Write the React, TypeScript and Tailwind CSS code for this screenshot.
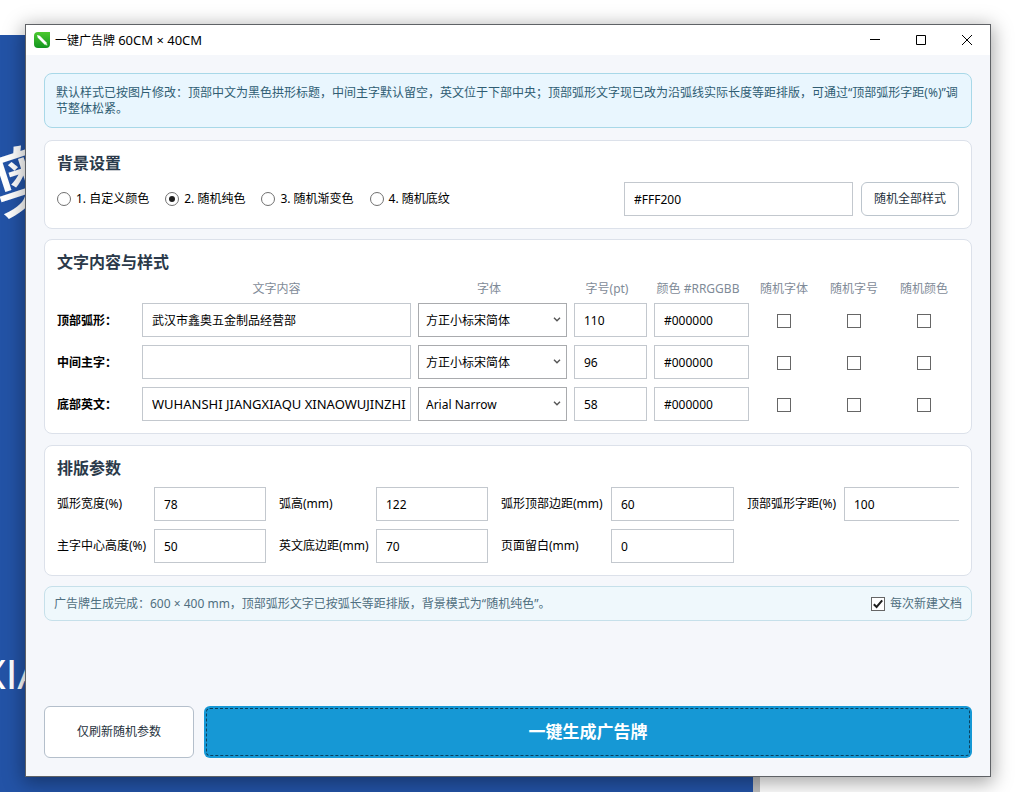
import { useState } from 'react';
import type { InputHTMLAttributes } from 'react';

interface TextRow {
  id: string;
  label: string;
  content: string;
  font: string;
  size: string;
  color: string;
}

interface Param {
  id: string;
  label: string;
  value: string;
}

const MODES = ['1. 自定义颜色', '2. 随机纯色', '3. 随机渐变色', '4. 随机底纹'];

const FONTS = ['方正小标宋简体', 'Arial Narrow'];

const ROWS: TextRow[] = [
  { id: 'top', label: '顶部弧形：', content: '武汉市鑫奥五金制品经营部', font: '方正小标宋简体', size: '110', color: '#000000' },
  { id: 'middle', label: '中间主字：', content: '', font: '方正小标宋简体', size: '96', color: '#000000' },
  {
    id: 'bottom',
    label: '底部英文：',
    content: 'WUHANSHI JIANGXIAQU XINAOWUJINZHIPINJINGYINGBU',
    font: 'Arial Narrow',
    size: '58',
    color: '#000000',
  },
];

const PARAMS: Param[] = [
  { id: 'arc-width', label: '弧形宽度(%)', value: '78' },
  { id: 'arc-height', label: '弧高(mm)', value: '122' },
  { id: 'arc-top', label: '弧形顶部边距(mm)', value: '60' },
  { id: 'arc-spacing', label: '顶部弧形字距(%)', value: '100' },
  { id: 'main-center', label: '主字中心高度(%)', value: '50' },
  { id: 'en-bottom', label: '英文底边距(mm)', value: '70' },
  { id: 'page-margin', label: '页面留白(mm)', value: '0' },
];

const RANDOM_COLUMNS = ['随机字体', '随机字号', '随机颜色'];

const card = 'rounded-lg border border-[#dce1ea] bg-white p-3';
const heading = 'mb-2 text-[16px] leading-[21px] font-bold text-[#2b3a4a]';

function TextBox({ className = '', ...props }: InputHTMLAttributes<HTMLInputElement>) {
  return (
    <input
      type="text"
      className={'block h-[34px] border border-[#c3c8ce] bg-white pr-1 pl-[9px] text-black outline-none ' + className}
      {...props}
    />
  );
}

function CheckBox({ className = '', ...props }: InputHTMLAttributes<HTMLInputElement>) {
  return (
    <span className={'relative inline-block size-[14px] ' + className}>
      <input
        type="checkbox"
        className="peer block size-[14px] appearance-none border border-[#666] bg-white"
        {...props}
      />
      <svg
        viewBox="0 0 14 14"
        className="pointer-events-none absolute inset-0 hidden size-[14px] peer-checked:block"
        fill="none"
        stroke="#1f1f1f"
        strokeWidth="2"
      >
        <path d="M2.8 7.2 5.6 10 11.2 3.4" />
      </svg>
    </span>
  );
}

function AppIcon() {
  return (
    <svg viewBox="0 0 16 16" className="size-4">
      <defs>
        <linearGradient id="logo" x1="0" y1="0" x2="0" y2="1">
          <stop offset="0" stopColor="#4cc92f" />
          <stop offset="1" stopColor="#12951f" />
        </linearGradient>
      </defs>
      <path d="M4 0H16V12a4 4 0 0 1-4 4H4a4 4 0 0 1-4-4V4a4 4 0 0 1 4-4Z" fill="url(#logo)" />
      <path d="M3 3 5.8 3.8 13 11 11 13 3.8 5.8Z" fill="#fff" />
      <path d="M11 13 13 11 13.4 13.4Z" fill="#c9efc4" />
    </svg>
  );
}

function TitleBar() {
  return (
    <header className="flex h-[30px] items-center bg-white pl-2">
      <AppIcon />
      <h1 className="ml-[5px] flex-1 text-black">
        一键广告牌 <span className="text-[13px]">60CM × 40CM</span>
      </h1>
      <button type="button" aria-label="最小化" className="flex h-full w-[46px] items-center justify-center">
        <svg viewBox="0 0 10 10" className="size-[10px]" stroke="#000">
          <path d="M0 4.5H10" />
        </svg>
      </button>
      <button type="button" aria-label="最大化" className="flex h-full w-[46px] items-center justify-center">
        <svg viewBox="0 0 10 10" className="size-[10px]" stroke="#000" fill="none">
          <path d="M.5 .5H9.5V9.5H.5Z" />
        </svg>
      </button>
      <button type="button" aria-label="关闭" className="flex h-full w-[46px] items-center justify-center">
        <svg viewBox="0 0 10 10" className="size-[10px]" stroke="#000">
          <path d="M0 0 10 10M10 0 0 10" />
        </svg>
      </button>
    </header>
  );
}

/** The drawing page that lies behind the dialog. */
function Canvas() {
  return (
    <div
      aria-hidden="true"
      className="absolute top-[35px] bottom-0 left-0 w-[760px] border-r-[7px] border-[#c0c0c0] bg-[#2353a6] text-white"
    >
      <div className="relative h-full w-[26px] overflow-hidden">
        <span className="absolute top-[92px] -left-[9px] -rotate-18 text-[72px] leading-[100px] font-medium">奥</span>
        <span className="absolute top-[614px] -left-[20px] font-[Lato] text-[40px] leading-[50px]">XIA</span>
      </div>
    </div>
  );
}

function BackgroundCard() {
  const [mode, setMode] = useState(1);

  return (
    <section className={card}>
      <h2 className={heading}>背景设置</h2>
      <div className="flex items-center gap-2">
        <div className="flex flex-1 gap-4">
          {MODES.map((label, i) => (
            <label key={label} className="flex items-center gap-[5px] whitespace-nowrap">
              <input
                type="radio"
                name="mode"
                checked={mode === i}
                onChange={() => setMode(i)}
                className="flex size-[14px] appearance-none items-center justify-center rounded-full border border-[#707070] bg-white before:size-[6px] before:rounded-full checked:before:bg-[#1f1f1f]"
              />
              {label}
            </label>
          ))}
        </div>
        <TextBox aria-label="背景颜色" defaultValue="#FFF200" className="w-[229px]" />
        <button type="button" className="h-[34px] w-[98px] rounded-md border border-[#bcc5cd] bg-white text-[#26323d]">
          随机全部样式
        </button>
      </div>
    </section>
  );
}

function TextCard() {
  return (
    <section className={card + ' mb-px'}>
      <h2 className={heading}>文字内容与样式</h2>
      <table className="w-full table-fixed border-collapse">
        <thead className="text-[#7f8b98]">
          <tr>
            <td className="w-[85px]" />
            <th className="pr-[7px] leading-4 font-normal">文字内容</th>
            <th className="w-[156px] pr-[14px] leading-4 font-normal">字体</th>
            <th className="w-[80px] pr-[14px] leading-4 font-normal">字号(pt)</th>
            <th className="w-[95px] pr-[7px] leading-4 font-normal whitespace-nowrap">颜色 #RRGGBB</th>
            {RANDOM_COLUMNS.map((name) => (
              <th key={name} className="w-[70px] leading-4 font-normal">
                {name}
              </th>
            ))}
          </tr>
        </thead>
        <tbody className="[&>tr:first-child>*]:pt-[6px]">
          {ROWS.map((row) => (
            <tr key={row.id}>
              <th scope="row" className="pt-2 text-left text-black">
                <label htmlFor={row.id} className="block pt-[2px]">
                  {row.label}
                </label>
              </th>
              <td className="pt-2 pr-[7px]">
                <TextBox
                  id={row.id}
                  defaultValue={row.content}
                  className={row.id === 'bottom' ? 'w-full text-[13px]' : 'w-full'}
                />
              </td>
              <td className="pt-2 pr-[7px]">
                <div className="relative">
                  <select
                    aria-label={row.label + '字体'}
                    defaultValue={row.font}
                    className="block h-[34px] w-full appearance-none border border-[#a9abae] bg-white px-[7px] pt-[2px] text-black outline-none"
                  >
                    {FONTS.map((font) => (
                      <option key={font}>{font}</option>
                    ))}
                  </select>
                  <svg
                    viewBox="0 0 8 5"
                    className="pointer-events-none absolute top-[14px] right-[6px] h-[5px] w-2"
                    fill="none"
                    stroke="#555"
                    strokeWidth="1.4"
                  >
                    <path d="M1 .8 4 3.8 7 .8" />
                  </svg>
                </div>
              </td>
              <td className="pt-2 pr-[7px]">
                <TextBox aria-label={row.label + '字号'} defaultValue={row.size} className="w-full" />
              </td>
              <td className="pt-2">
                <TextBox aria-label={row.label + '颜色'} defaultValue={row.color} className="w-full" />
              </td>
              {RANDOM_COLUMNS.map((name) => (
                <td key={name} className="pt-2 text-center">
                  <CheckBox aria-label={row.label + name} className="align-middle" />
                </td>
              ))}
            </tr>
          ))}
        </tbody>
      </table>
    </section>
  );
}

function LayoutCard() {
  return (
    <section className={card}>
      <h2 className={heading}>排版参数</h2>
      {/* The last column runs past the card and is cut at its padding */}
      <div className="grid grid-cols-[97px_125px_97px_125px_110px_136px_97px_136px] items-center gap-y-2 overflow-hidden">
        {PARAMS.map(({ id, label, value }) => (
          <div key={id} className="contents">
            <label htmlFor={id} className="whitespace-nowrap">
              {label}
            </label>
            <div className="pr-[13px]">
              <TextBox id={id} defaultValue={value} className="w-full" />
            </div>
          </div>
        ))}
      </div>
    </section>
  );
}

export default function App() {
  return (
    <div className="relative flex min-h-screen overflow-hidden bg-white pt-6 pr-11 pb-[15px] pl-[25px] font-['Noto_Sans','Noto_Sans_CJK_SC',sans-serif] text-[12px] leading-4 text-black">
      <Canvas />
      <div className="relative flex min-w-0 flex-1 flex-col border border-[#5f6266] bg-[#f5f7fb] shadow-[0_4px_18px_2px_rgba(0,0,0,0.35)]">
        <TitleBar />
        <main className="flex flex-1 flex-col gap-[10px] p-[18px]">
          <p className="mb-[2px] rounded-lg border border-[#a8d8e8] bg-[#e9f6fe] px-[11px] pt-[11px] pb-[10px] text-[#2f5d73]">
            默认样式已按图片修改：顶部中文为黑色拱形标题，中间主字默认留空，英文位于下部中央；顶部弧形文字现已改为沿弧线实际长度等距排版，可通过“顶部弧形字距(%)”调节整体松紧。
          </p>
          <BackgroundCard />
          <TextCard />
          <LayoutCard />
          <div className="flex h-[35px] items-center justify-between rounded-lg border border-[#c6e0ea] bg-[#eff8fc] px-[9px] text-[#4f6f80]">
            <p role="status">广告牌生成完成：600 × 400 mm，顶部弧形文字已按弧长等距排版，背景模式为“随机纯色”。</p>
            <label className="flex items-center gap-[5px]">
              <CheckBox defaultChecked />
              每次新建文档
            </label>
          </div>
          <div className="mt-auto flex h-[52px] gap-[10px]">
            <button type="button" className="w-[150px] rounded-md border border-[#b4bfcb] bg-white text-[#26323d]">
              仅刷新随机参数
            </button>
            <button
              type="button"
              className="flex-1 rounded-md bg-[#1698d5] text-[17px] font-bold text-white outline-1 -outline-offset-3 outline-[#0b3f5c] outline-dashed"
            >
              一键生成广告牌
            </button>
          </div>
        </main>
      </div>
    </div>
  );
}
